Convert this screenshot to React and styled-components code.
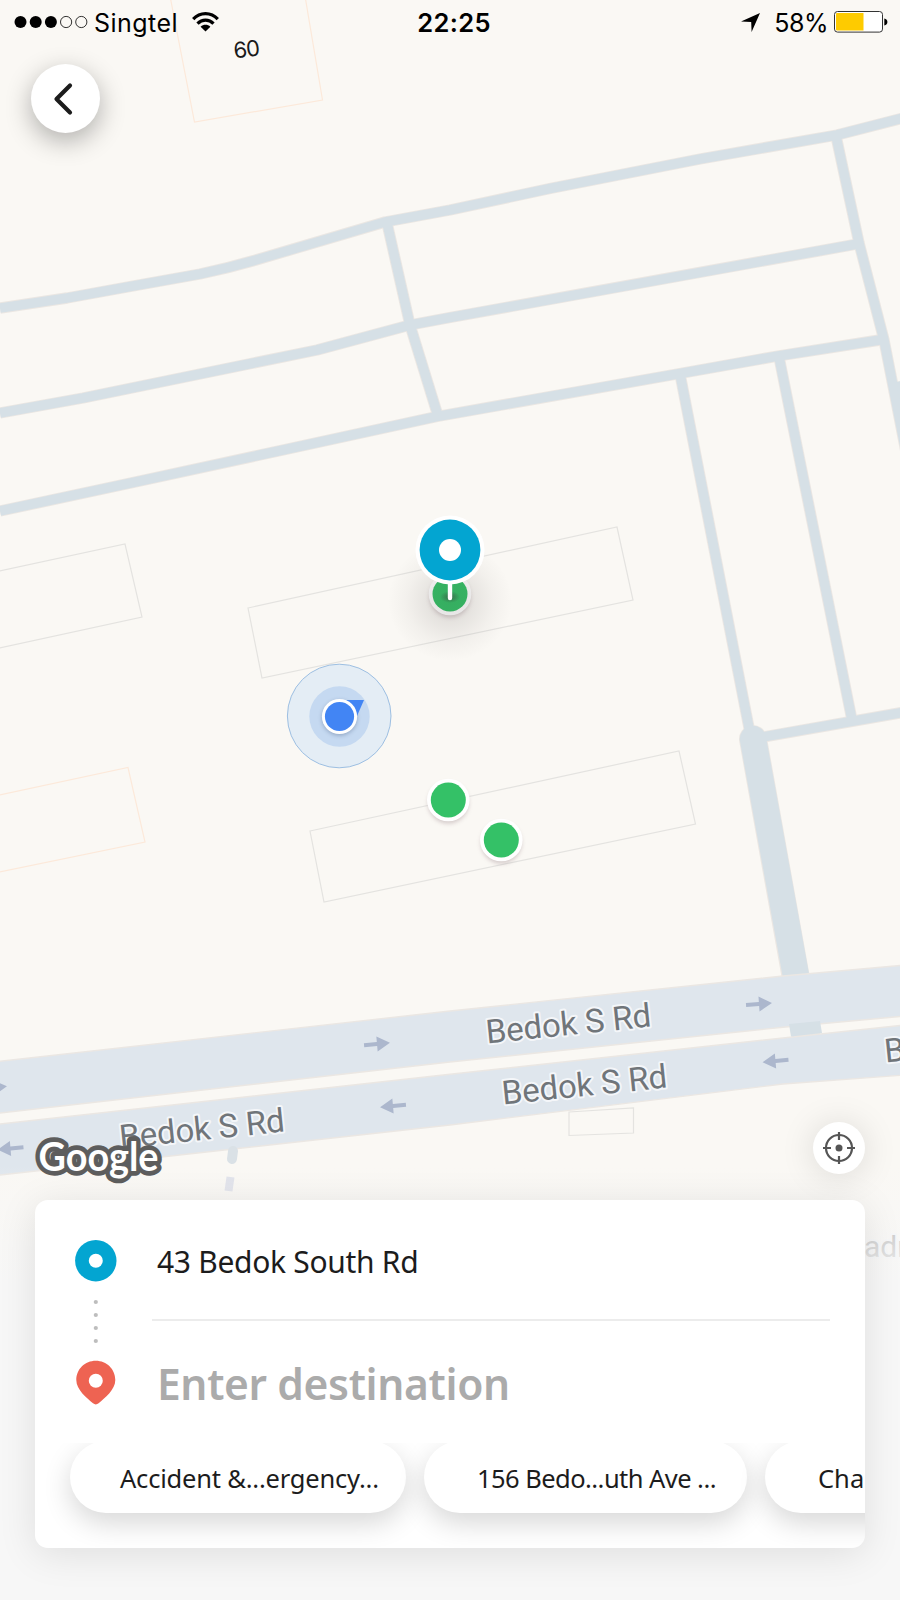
import React from "react";
import styled, { createGlobalStyle } from "styled-components";

const Global = createGlobalStyle`
  *, *::before, *::after { box-sizing: border-box; }
  body { margin: 0; background: #f7f7f7; overflow: hidden; }
`;

const uiFont = `"Noto Sans", "Open Sans", sans-serif`;
const systemFont = `Inter, "Liberation Sans", sans-serif`;

const Screen = styled.main`
  position: relative;
  width: 900px;
  height: 1600px;
  overflow: hidden;
  background: #faf8f4;
`;

const MapCanvas = styled.svg`
  position: absolute;
  inset: 0;
  display: block;
`;

const Overlay = styled.div`
  position: relative;
  height: 100%;
  display: flex;
  flex-direction: column;
`;

const StatusBar = styled.header`
  height: 44px;
  padding: 0 12px 0 14px;
  display: grid;
  grid-template-columns: 1fr auto 1fr;
  align-items: center;
  font-family: ${systemFont};
  color: #000;
`;

const StatusGroup = styled.div`
  display: flex;
  align-items: center;
  justify-content: ${(p) => (p.$end ? "flex-end" : "flex-start")};
`;

const StatusText = styled.span`
  font-size: ${(p) => (p.$strong ? 25.5 : 25)}px;
  line-height: 30px;
  font-weight: ${(p) => (p.$strong ? 600 : 400)};
  letter-spacing: ${(p) => p.$tracking || "0"};
  margin: ${(p) => p.$margin || "0"};
  padding-top: 2px;
`;

const Icon = styled.svg`
  display: block;
  flex: none;
  overflow: visible;
`;

const RoundButton = styled.button`
  width: ${(p) => p.$size}px;
  height: ${(p) => p.$size}px;
  padding: 0;
  border: 0;
  border-radius: 50%;
  background: #fff;
  display: grid;
  place-items: center;
  box-shadow: ${(p) => p.$shadow};
`;

const TopActions = styled.div`
  padding: 20px 0 0 31px;
`;

const MapActions = styled.div`
  margin-top: auto;
  padding: 0 35px 26px 0;
  display: flex;
  justify-content: flex-end;
`;

const Card = styled.section`
  height: 348px;
  margin: 0 35px 52px;
  border-radius: 13px;
  background: #fff;
  overflow: hidden;
  flex: none;
  box-shadow: 0 6px 38px rgba(0, 0, 0, 0.1);
  font-family: ${uiFont};
`;

const Route = styled.div`
  height: 243px;
  display: grid;
  grid-template-columns: 117px 1fr;
`;

const RouteRail = styled.div`
  padding: 40px 0 0 40px;
`;

const RouteFields = styled.div`
  margin-right: 35px;
`;

const Field = styled.div`
  height: ${(p) => (p.$placeholder ? 119 : 121)}px;
  padding: ${(p) => (p.$placeholder ? "34px 0 0 5px" : "41px 0 0 5px")};
  border-bottom: ${(p) => (p.$placeholder ? "0" : "2px solid #ececec")};
  color: ${(p) => (p.$placeholder ? "#ababab" : "#1c1c1c")};
  font-size: ${(p) => (p.$placeholder ? 42.5 : 30)}px;
  line-height: ${(p) => (p.$placeholder ? 58 : 42)}px;
  font-weight: ${(p) => (p.$placeholder ? 600 : 400)};
  letter-spacing: ${(p) => (p.$placeholder ? "-0.35px" : "-0.3px")};
  white-space: nowrap;
`;

const Suggestions = styled.div`
  height: 105px;
  padding-left: 35px;
  display: flex;
  gap: 18px;
  overflow: hidden;
`;

const Chip = styled.button`
  flex: none;
  width: ${(p) => p.$width}px;
  height: 72px;
  margin-top: -2px;
  padding: 3px 0 0 ${(p) => p.$inset}px;
  border: 0;
  border-radius: 36px;
  background: #fff;
  box-shadow: 0 10px 28px rgba(0, 0, 0, 0.16);
  color: #1c1c1c;
  font-family: ${uiFont};
  font-size: 25.5px;
  line-height: 69px;
  letter-spacing: ${(p) => p.$tracking || 0}px;
  text-align: left;
  white-space: nowrap;
`;

const LANES = [
  "M0 308 L67 298 L133 286 L200 274 Q233 267 266 257 L385 222 L450 210 L550 188.5 L700 159 L837 135 L905 117.5",
  "M0 413 L83 398 L317 350 L410 325 L450 317.5 L860 243.5",
  "M0 511 L133 482.5 L283 450 L437 416.5 L680 373.5 L778 356 L883 339.5",
  "M387 223 L410 325 L438 416",
  "M836 136 L859 243 L884 340 L906 452",
  "M901 381 L912 440",
  "M680 374 L751 738",
  "M779 357 L852 720",
  "M752 739 L905 712",
];

const BUILDINGS = [
  { d: "M248 608 L617 527 L633 600 L262 678 Z" },
  { d: "M310 831 L679 751 L695.5 824 L324 902 Z" },
  { d: "M-5 572 L125 544 L142 617 L-5 649" },
  { d: "M569 1112 L633.5 1108 L633.5 1133 L569 1135.5 Z" },
  { d: "M-5 796 L128 767.5 L145 842 L-5 873", warm: true },
  { d: "M170 -4 L194.5 122 L322.5 100 L305 -4", warm: true },
];

const ARROWS = [
  [377, 1044, -5], [759, 1004, -4], [-6, 1087.5, -5],
  [393, 1106, 175], [775.5, 1061, 175], [10.5, 1148.5, 175],
];

const ROAD_LABELS = [
  [487, 1043.5], [503, 1104.5], [120.5, 1148.5], [885.5, 1062.5],
];

const GREEN_STOPS = [[448.3, 800], [501.3, 840]];

function Stop({ x, y }) {
  return (
    <g>
      <circle cx={x} cy={y + 3} r="20.5" fill="#8b7279" opacity=".34" filter="url(#soft)" />
      <circle cx={x} cy={y} r="21.3" fill="#fff" />
      <circle cx={x} cy={y} r="17.5" fill="#34c167" />
    </g>
  );
}

function CityMap() {
  return (
    <MapCanvas width="900" height="1600" viewBox="0 0 900 1600">
      <defs>
        <filter id="soft" x="-50%" y="-50%" width="200%" height="200%">
          <feGaussianBlur stdDeviation="2" />
        </filter>
        <radialGradient id="pinShadow">
          <stop offset="0" stopColor="#403838" stopOpacity=".14" />
          <stop offset=".35" stopColor="#403838" stopOpacity=".11" />
          <stop offset=".7" stopColor="#403838" stopOpacity=".04" />
          <stop offset="1" stopColor="#403838" stopOpacity="0" />
        </radialGradient>
        <radialGradient id="pinTip">
          <stop offset="0" stopColor="#383838" stopOpacity=".55" />
          <stop offset="1" stopColor="#383838" stopOpacity="0" />
        </radialGradient>
        <linearGradient id="fade" x1="0" y1="0" x2="0" y2="1">
          <stop offset="0" stopColor="#f7f7f7" stopOpacity="0" />
          <stop offset="1" stopColor="#f7f7f7" />
        </linearGradient>
      </defs>

      {BUILDINGS.map((b) => (
        <path key={b.d} d={b.d} fill="none" stroke={b.warm ? "#fce9da" : "#e4e3e0"} strokeWidth="1.2" />
      ))}

      <g fill="none" strokeLinejoin="round">
        {LANES.map((d) => <path key={d} d={d} stroke="#ebe7e3" strokeWidth="11.4" />)}
        <path d="M753 739 L806 1034" stroke="#ebe7e3" strokeWidth="28" strokeLinecap="round" />
        {LANES.map((d) => <path key={d} d={d} stroke="#d6e0e6" strokeWidth="9.6" />)}
        <path d="M753 739 L796 976" stroke="#d6e0e6" strokeWidth="26.4" strokeLinecap="round" />
      </g>

      <path d="M-5 1061.8 L450 1011 L783 976 L905 965 V1016 L783 1027.2 L450 1062 L-5 1113.5 Z" fill="#dfe6ed" stroke="#ebe7e3" strokeWidth="1.4" />
      <path d="M-5 1124.6 L450 1074.3 L783 1038 L905 1025 V1075 L783 1084 L450 1125 L-5 1175.5 Z" fill="#dfe6ed" stroke="#ebe7e3" strokeWidth="1.4" />
      <path d="M789 1024 L820 1021 L822 1033 L791 1036.5 Z" fill="#d6e0e6" />
      <path d="M233 1151 L232 1159" stroke="#dae1e6" strokeWidth="10" strokeLinecap="round" />
      <path d="M230.5 1177 L228.5 1191" stroke="#dfe1ea" strokeWidth="8" />

      {ARROWS.map(([x, y, a]) => (
        <path key={`${x}-${y}`} transform={`translate(${x} ${y}) rotate(${a})`} d="M-13 -2 H0 V-7.5 L13 0 L0 7.5 V2 H-13 Z" fill="#acb7cd" />
      ))}

      <g fontFamily='Roboto, "Liberation Sans", sans-serif' fontSize="33" fill="#70757a" stroke="#f4f6f9" strokeWidth="4" strokeLinejoin="round" paintOrder="stroke">
        {ROAD_LABELS.map(([x, y]) => (
          <text key={x} transform={`translate(${x} ${y}) rotate(-5.9)`} textLength="166">Bedok S Rd</text>
        ))}
        <text x="864" y="1257" fontSize="30" fill="#9a9a9a">adr</text>
      </g>
      <text transform="translate(234.5 58.5) rotate(-7)" fontFamily='Inter, sans-serif' fontSize="22" fill="#1a1a1a" textLength="26.5">60</text>

      <rect y="1165" width="900" height="120" fill="url(#fade)" />
      <rect y="1285" width="900" height="315" fill="#f7f7f7" />

      <text x="38.5" y="1171" textLength="120" lengthAdjust="spacingAndGlyphs" fontFamily='Lato, sans-serif' fontWeight="700" fontSize="40" fill="#fff" stroke="#5d5d5d" strokeWidth="9.5" strokeLinejoin="round" paintOrder="stroke">Google</text>

      <circle cx="339.2" cy="716" r="51.8" fill="#e4edf5" stroke="#9dbfe2" strokeWidth="1" />
      <circle cx="339.5" cy="716.5" r="30.2" fill="#c5d9f1" />
      <circle cx="339.5" cy="718" r="17.5" fill="#53698c" opacity=".45" filter="url(#soft)" />
      <path d="M346 700 H364 L357 716 Z" fill="#4285f4" />
      <circle cx="339.5" cy="716.5" r="17.6" fill="#fff" />
      <circle cx="339.5" cy="716.5" r="14.6" fill="#4285f4" />

      <Stop x={450} y={594} />
      <ellipse cx="450" cy="601" rx="62" ry="60" fill="url(#pinShadow)" />
      <ellipse cx="450" cy="597" rx="10" ry="6" fill="url(#pinTip)" />
      <circle cx="450" cy="550" r="34.5" fill="#fff" />
      <path d="M450 580 V598" stroke="#fff" strokeWidth="4.4" strokeLinecap="round" />
      <circle cx="450" cy="550" r="30.4" fill="#03a5d1" />
      <circle cx="450" cy="550" r="11" fill="#fff" />
      {GREEN_STOPS.map(([x, y]) => <Stop key={x} x={x} y={y} />)}
    </MapCanvas>
  );
}

const SignalIcon = () => (
  <Icon width="74" height="14" viewBox="0 0 74 14">
    {[0, 1, 2, 3, 4].map((i) => (
      <circle key={i} cx={6.5 + i * 15.2} cy="7" r={i < 3 ? 6 : 5.6} fill={i < 3 ? "#000" : "none"} stroke="#000" strokeWidth={i < 3 ? 0 : 0.8} />
    ))}
  </Icon>
);

const WifiIcon = () => (
  <Icon width="27" height="20" viewBox="0 0 27 20">
    <g fill="none" stroke="#000" strokeWidth="3.2">
      <path d="M1.2 7.2 C8 -.2 19 -.2 25.8 7.2" />
      <path d="M5.5 11.6 C10 7 17 7 21.5 11.6" />
    </g>
    <path d="M13.5 19.5 L8.6 14.8 C11.5 12.2 15.5 12.2 18.4 14.8 Z" />
  </Icon>
);

const LocationIcon = () => (
  <Icon width="19" height="19" viewBox="0 0 19 19">
    <path d="M19 0 L10.6 19 L10.2 9 L0 8.4 Z" />
  </Icon>
);

const BatteryIcon = () => (
  <Icon width="54" height="22" viewBox="0 0 54 22">
    <rect x=".5" y=".5" width="48" height="20.6" rx="3" fill="#fff" stroke="#333" />
    <path d="M3 2 H29.5 V19.6 H3 Q2 19.6 2 18.6 V3 Q2 2 3 2 Z" fill="#fecb00" />
    <path d="M50.3 7.5 Q53.4 8.2 53.4 11 Q53.4 13.8 50.3 14.5 Z" />
  </Icon>
);

const RouteIcon = () => (
  <Icon width="42" height="168" viewBox="0 0 42 168">
    <circle cx="20.8" cy="20.7" r="20.7" fill="#03a5d1" />
    <circle cx="20.8" cy="20.7" r="7" fill="#fff" />
    {[62, 75, 88, 101].map((y) => <circle key={y} cx="20.8" cy={y} r="2.1" fill="#bdbdbd" />)}
    <path d="M20.8 120.7 C10 120.7 1.3 129 1.3 140 C1.3 150 12 158 18 163.3 Q20.8 165.6 23.6 163.3 C29.6 158 40.3 150 40.3 140 C40.3 129 31.6 120.7 20.8 120.7 Z" fill="#ee6352" />
    <circle cx="20.8" cy="140.7" r="7" fill="#fff" />
  </Icon>
);

export default function App() {
  return (
    <Screen>
      <Global />
      <CityMap />
      <Overlay>
        <StatusBar>
          <StatusGroup>
            <SignalIcon />
            <StatusText $margin="0 14px 0 6px" $tracking="0.45px">Singtel</StatusText>
            <WifiIcon />
          </StatusGroup>
          <StatusText $strong $tracking="0.35px" $margin="0 0 0 6px">22:25</StatusText>
          <StatusGroup $end>
            <LocationIcon />
            <StatusText $margin="0 6px 0 14px" $tracking="-0.5px">58%</StatusText>
            <BatteryIcon />
          </StatusGroup>
        </StatusBar>
        <TopActions>
          <RoundButton $size={69} $shadow="0 8px 26px rgba(0,0,0,.3)" aria-label="Back">
            <Icon width="23" height="30" viewBox="0 0 23 30">
              <path d="M16 1.5 L2.5 15 L16 28.5" fill="none" stroke="#1c1c1c" strokeWidth="4.2" strokeLinecap="round" strokeLinejoin="round" />
            </Icon>
          </RoundButton>
        </TopActions>
        <MapActions>
          <RoundButton $size={52} $shadow="0 2px 34px rgba(0,0,0,.13)" aria-label="My location">
            <Icon width="34" height="34" viewBox="0 0 34 34">
              <g fill="none" stroke="#555" strokeWidth="2.2">
                <circle cx="17" cy="17" r="13" />
                <path d="M17 1 V9 M17 25 V33 M1 17 H9 M25 17 H33" />
              </g>
              <circle cx="17" cy="17" r="3.5" fill="#555" />
            </Icon>
          </RoundButton>
        </MapActions>
        <Card>
          <Route>
            <RouteRail><RouteIcon /></RouteRail>
            <RouteFields>
              <Field>43 Bedok South Rd</Field>
              <Field $placeholder>Enter destination</Field>
            </RouteFields>
          </Route>
          <Suggestions>
            <Chip $width={336} $inset={50} $tracking={-0.2}>Accident &amp;...ergency...</Chip>
            <Chip $width={323} $inset={53} $tracking={-0.55}>156 Bedo...uth Ave ...</Chip>
            <Chip $width={330} $inset={53}>Cha</Chip>
          </Suggestions>
        </Card>
      </Overlay>
    </Screen>
  );
}
